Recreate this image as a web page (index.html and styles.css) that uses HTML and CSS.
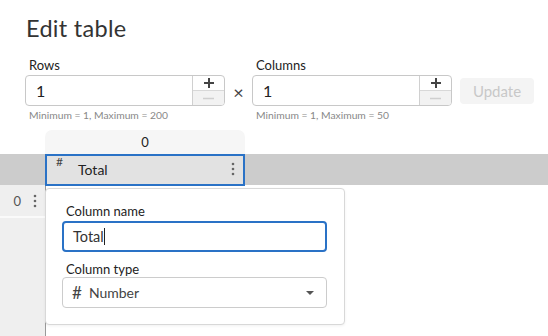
FILE: index.html
```html
<!DOCTYPE html>
<html lang="en">
<head>
    <meta charset="UTF-8">
    <meta name="viewport" content="width=device-width, initial-scale=1.0">
    <title>Edit table</title>
    <link rel="stylesheet" href="styles.css">
</head>
<body>

<div class="editor">
    <h1 class="title">Edit table</h1>

    <div class="dims">
        <div class="dim-field">
            <label class="dim-label">Rows</label>
            <div class="spin">
                <span class="spin-value">1</span>
                <div class="spin-btns">
                    <span class="spin-up">
                        <svg width="10" height="10" viewBox="0 0 10 10"><path d="M5 0 V10 M0 5 H10"/></svg>
                    </span>
                    <span class="spin-down">
                        <svg width="11" height="11" viewBox="0 0 11 11"><path d="M0 5.5 H11"/></svg>
                    </span>
                </div>
            </div>
            <div class="dim-hint">Minimum = 1, Maximum = 200</div>
        </div>
        <span class="times">&times;</span>
        <div class="dim-field">
            <label class="dim-label">Columns</label>
            <div class="spin">
                <span class="spin-value">1</span>
                <div class="spin-btns">
                    <span class="spin-up">
                        <svg width="10" height="10" viewBox="0 0 10 10"><path d="M5 0 V10 M0 5 H10"/></svg>
                    </span>
                    <span class="spin-down">
                        <svg width="11" height="11" viewBox="0 0 11 11"><path d="M0 5.5 H11"/></svg>
                    </span>
                </div>
            </div>
            <div class="dim-hint">Minimum = 1, Maximum = 50</div>
        </div>
        <button class="btn-update" disabled>Update</button>
    </div>

    <div class="table">
        <div class="col-index-row">
            <div class="col-index">0</div>
        </div>
        <div class="band">
            <div class="band-spacer"></div>
            <div class="col-head">
                <span class="col-hash">#</span>
                <span class="col-name">Total</span>
                <svg class="kebab" width="4" height="14" viewBox="0 0 4 14">
                    <circle cx="2" cy="2" r="1.3"/>
                    <circle cx="2" cy="7" r="1.3"/>
                    <circle cx="2" cy="12" r="1.3"/>
                </svg>
            </div>
        </div>
        <div class="body">
            <div class="row-heads">
                <div class="row-head">
                    <span>0</span>
                    <svg class="kebab" width="4" height="14" viewBox="0 0 4 14">
                        <circle cx="2" cy="2" r="1.3"/>
                        <circle cx="2" cy="7" r="1.3"/>
                        <circle cx="2" cy="12" r="1.3"/>
                    </svg>
                </div>
            </div>
            <div class="cells"></div>
        </div>

        <!-- popup for column settings -->
        <div class="col-popup">
            <label class="pop-label">Column name</label>
            <div class="text-field focused">Total<span class="caret"></span></div>
            <label class="pop-label">Column type</label>
            <div class="select">
                <span class="select-hash">#</span>
                <span class="select-text">Number</span>
                <svg class="select-arrow" width="10" height="6" viewBox="0 0 10 6">
                    <path d="M1 1 L9 1 L5 5 Z"/>
                </svg>
            </div>
        </div>
    </div>
</div>

</body>
</html>
```

FILE: styles.css
```css
/* Reset */
* {
    margin: 0;
    padding: 0;
    box-sizing: border-box;
    font-family: Lato, "Open Sans", Arial, sans-serif;
}

body {
    background: #fff;
    color: #333;
    width: 548px;
    height: 336px;
    overflow: hidden;
}

.editor {
    padding-top: 13px;
}

/* Title */
.title {
    font-size: 23.5px;
    font-weight: 400;
    line-height: 30px;
    color: #333;
    margin-left: 26px;
    letter-spacing: 0.3px;
}

/* Rows / columns inputs */
.dims {
    display: flex;
    align-items: flex-start;
    margin: 14px 0 0 25px;
}

.dim-field {
    width: 200px;
}

.dim-label {
    display: block;
    font-size: 13px;
    line-height: 16px;
    padding-left: 4px;
    margin-bottom: 2px;
    color: #222;
}

.spin {
    display: flex;
    height: 31px;
    border: 1px solid #c8c8c8;
    border-radius: 4px;
    overflow: hidden;
}

.spin-value {
    flex: 1;
    font-size: 16px;
    line-height: 29px;
    padding-left: 10px;
    color: #222;
}

.spin-btns {
    width: 32px;
    display: flex;
    flex-direction: column;
    border-left: 1px solid #d0d0d0;
}

.spin-up,
.spin-down {
    flex: 1;
    display: flex;
    align-items: center;
    justify-content: center;
}

.spin-up {
    border-bottom: 1px solid #d8d8d8;
}

.spin-up svg path {
    stroke: #444;
    stroke-width: 2;
}

.spin-down {
    background: #f2f2f2;
}

.spin-down svg path {
    stroke: #cfcfcf;
    stroke-width: 1.6;
}

.dim-hint {
    font-size: 10.3px;
    line-height: 12px;
    color: #888;
    padding-left: 4px;
    margin-top: 3px;
}

.times {
    width: 27px;
    text-align: center;
    font-size: 18px;
    line-height: 18px;
    margin-top: 26px;
    color: #444;
}

.btn-update {
    margin: 21px 0 0 8px;
    width: 74px;
    height: 26px;
    border: none;
    border-radius: 4px;
    background: #f4f4f4;
    color: #c8c8c8;
    font-size: 15px;
}

/* Table */
.table {
    position: relative;
    margin-top: 9px;
    height: 206px;
    display: flex;
    flex-direction: column;
}

.col-index-row {
    padding-left: 45px;
}

.col-index {
    width: 200px;
    height: 24px;
    background: #f6f6f6;
    border-radius: 7px 7px 0 0;
    text-align: center;
    font-size: 13px;
    line-height: 24px;
    color: #222;
}

.band {
    display: flex;
    height: 31px;
    background: #cccccc;
}

.band-spacer {
    width: 45px;
}

.col-head {
    position: relative;
    display: flex;
    align-items: center;
    width: 200px;
    height: 32px;
    background: #e2e2e2;
    border: 2px solid #2a72c6;
    padding: 0 8px 2px 31px;
}

.col-hash {
    position: absolute;
    left: 9px;
    top: 0;
    font-size: 12px;
    line-height: 12px;
    color: #444;
}

.col-name {
    flex: 1;
    font-size: 14px;
    color: #222;
}

.kebab {
    fill: #666;
}

.body {
    flex: 1;
    display: flex;
}

.row-heads {
    width: 45px;
    background: #efefef;
}

.row-head {
    display: flex;
    align-items: center;
    justify-content: flex-end;
    gap: 12px;
    height: 33px;
    padding-right: 8px;
    border-bottom: 2px solid #fafafa;
    font-size: 13px;
    color: #555;
}

.cells {
    flex: 1;
    border-left: 1px solid #999;
}

/* Column popup */
.col-popup {
    position: absolute;
    left: 45px;
    top: 58px;
    width: 300px;
    height: 137px;
    background: #fff;
    border: 1px solid #d8d8d8;
    border-radius: 4px;
    box-shadow: 0 1px 3px rgba(0, 0, 0, 0.06);
    padding: 14px 17px 0 16px;
}

.pop-label {
    display: block;
    font-size: 13px;
    line-height: 16px;
    padding-left: 4px;
    color: #222;
}

.text-field {
    height: 31px;
    margin: 2px 0 9px;
    border: 2px solid #2a72c6;
    border-radius: 4px;
    padding-left: 9px;
    font-size: 14.5px;
    line-height: 27px;
    color: #333;
}

.caret {
    display: inline-block;
    width: 1px;
    height: 17px;
    background: #222;
    vertical-align: -3px;
}

.select {
    display: flex;
    align-items: center;
    height: 31px;
    border: 1px solid #ccc;
    border-radius: 4px;
    padding: 0 11px 0 9px;
    font-size: 14px;
    color: #444;
}

.select-hash {
    font-size: 17px;
    margin-right: 7px;
}

.select-text {
    flex: 1;
}

.select-arrow {
    fill: #555;
}
```
